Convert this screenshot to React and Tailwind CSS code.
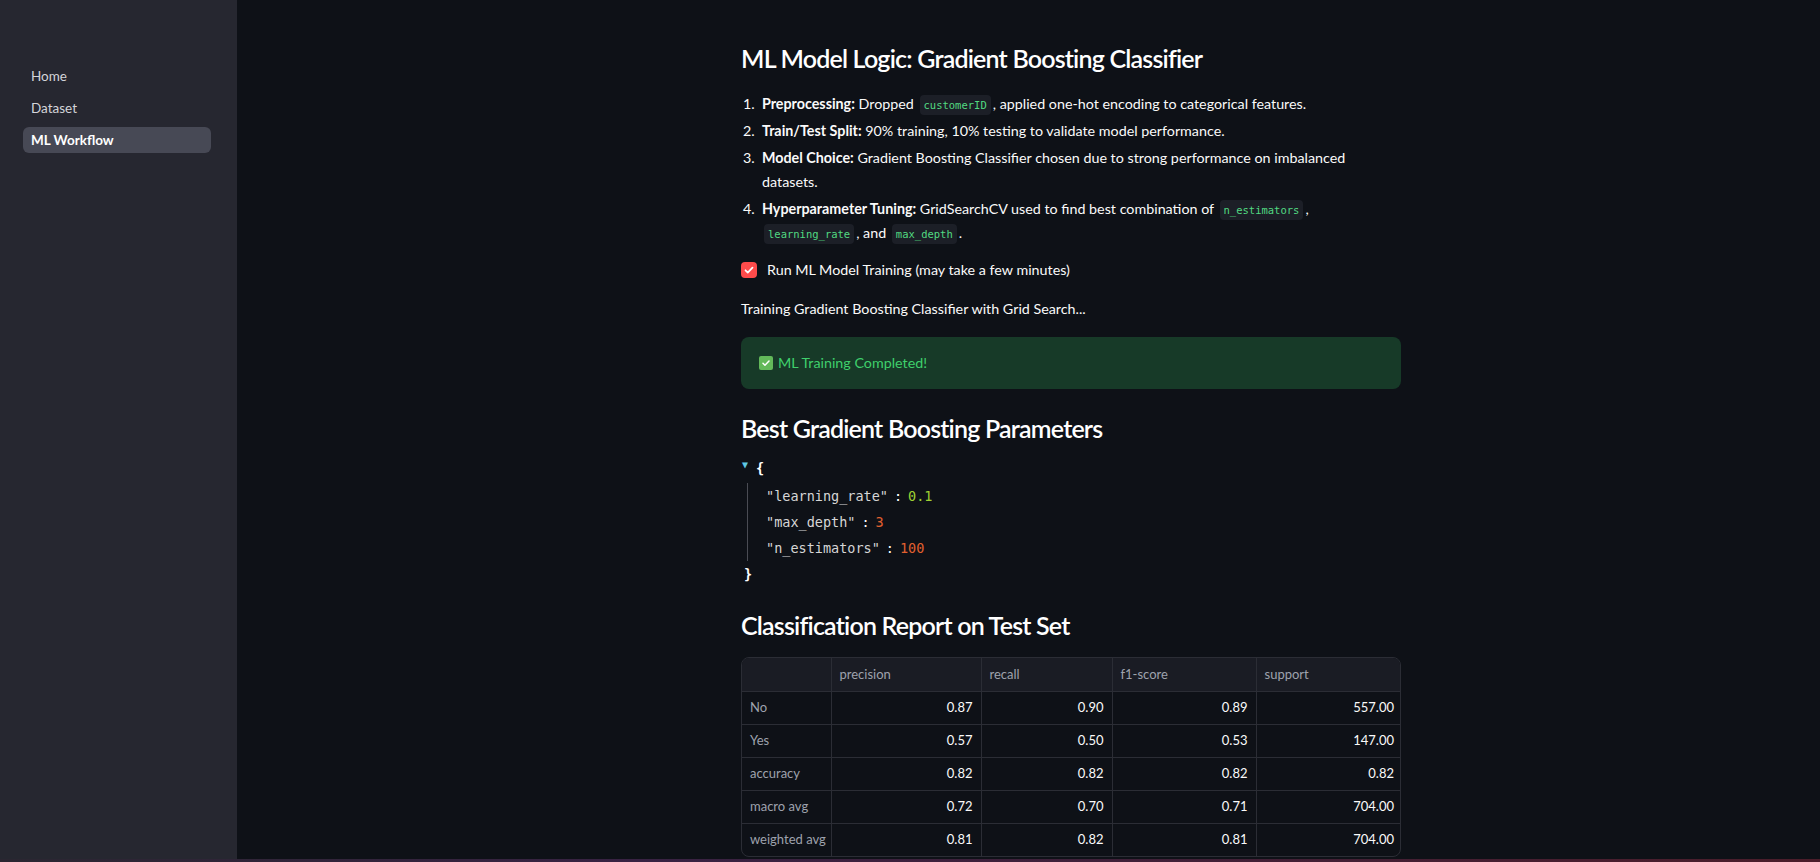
import React from 'react';

const navItems = ['Home', 'Dataset', 'ML Workflow'];

const reportRows = [
  ['No', '0.87', '0.90', '0.89', '557.00'],
  ['Yes', '0.57', '0.50', '0.53', '147.00'],
  ['accuracy', '0.82', '0.82', '0.82', '0.82'],
  ['macro avg', '0.72', '0.70', '0.71', '704.00'],
  ['weighted avg', '0.81', '0.82', '0.81', '704.00'],
];

const colWidths = ['w-[89px]', 'w-[150px]', 'w-[131px]', 'w-[144px]', 'w-[146px]'];

const Code = ({ children }) => (
  <code className="font-['DejaVu_Sans_Mono',monospace] text-[10.5px] leading-none text-[#52da82] bg-[#1c1f27] rounded-[4px] px-[4px] py-[4px] mx-[2px]">
    {children}
  </code>
);

const Sidebar = () => (
  <aside className="w-[237px] shrink-0 bg-[#262730] pt-[63px] pl-[23px]">
    <nav className="flex flex-col gap-[6px]">
      {navItems.map((item) => {
        const active = item === 'ML Workflow';
        return (
          <div
            key={item}
            className={
              active
                ? 'h-[26px] w-[188px] rounded-md bg-[#474955] px-2 flex items-center text-[13.5px] font-bold text-white'
                : 'h-[26px] w-[188px] rounded-md px-2 flex items-center text-[13.5px] text-[#d3d4d9]'
            }
          >
            {item}
          </div>
        );
      })}
    </nav>
  </aside>
);

const CheckIcon = ({ className }) => (
  <svg viewBox="0 0 16 16" className={className}>
    <path d="M4 8.3l2.6 2.6L12 5.4" fill="none" stroke="white" strokeWidth="2" strokeLinecap="round" strokeLinejoin="round" />
  </svg>
);

const JsonView = () => (
  <div className="font-['DejaVu_Sans_Mono',monospace] text-[13.5px] mt-[8px]">
    <div className="h-[29px] flex items-center">
      <span className="w-[15px] pl-[1px] text-[10px] leading-none text-[#5fc8e3] self-start pt-[6px]">▼</span>
      <span className="text-white font-bold">{'{'}</span>
    </div>
    <div className="ml-[6px] border-l border-[#4a4c54] pl-[18px]">
      <div className="h-[26px] flex items-center text-[#d6d6d6]">
        "learning_rate"<span className="text-white mx-[6px]">:</span>
        <span className="text-[#9fd133]">0.1</span>
      </div>
      <div className="h-[26px] flex items-center text-[#d6d6d6]">
        "max_depth"<span className="text-white mx-[6px]">:</span>
        <span className="text-[#e0602f]">3</span>
      </div>
      <div className="h-[26px] flex items-center text-[#d6d6d6]">
        "n_estimators"<span className="text-white mx-[6px]">:</span>
        <span className="text-[#e0602f]">100</span>
      </div>
    </div>
    <div className="h-[26px] flex items-center pl-[3px] text-white font-bold">{'}'}</div>
  </div>
);

const ReportTable = () => (
  <div className="mt-[14px] rounded-lg border border-[#2b2d35] overflow-hidden text-[13px]">
    <table className="w-full table-fixed border-collapse">
      <thead>
        <tr className="bg-[#1a1c24] h-[33px]">
          {['', 'precision', 'recall', 'f1-score', 'support'].map((h, i) => (
            <th
              key={i}
              className={`${colWidths[i]} text-left font-normal text-[#9ea2ad] px-2 border-b border-[#2b2d35] ${i < 4 ? 'border-r' : ''}`}
            >
              {h}
            </th>
          ))}
        </tr>
      </thead>
      <tbody>
        {reportRows.map((row, r) => (
          <tr key={row[0]} className="h-[33px]">
            {row.map((cell, i) => (
              <td
                key={i}
                className={`px-2 whitespace-nowrap border-[#2b2d35] ${i < 4 ? 'border-r' : ''} ${r < 4 ? 'border-b' : ''} ${
                  i === 0 ? 'text-left text-[#9ea2ad]' : 'text-right text-[#fafafa]'
                }`}
              >
                {cell}
              </td>
            ))}
          </tr>
        ))}
      </tbody>
    </table>
  </div>
);

export default function App() {
  return (
    <div className="h-[862px] w-[1820px] flex flex-col overflow-hidden bg-[#0e1117] font-[Lato,sans-serif] text-[#fafafa]">
      <div className="flex flex-1 min-h-0">
        <Sidebar />
        <main className="flex-1 overflow-hidden pl-[504px]">
          <div className="w-[660px] pt-[40px]">
            <h3 className="text-[25px] leading-[36px] font-semibold tracking-[-0.8px] text-white">
              ML Model Logic: Gradient Boosting Classifier
            </h3>

            <ol className="mt-[16px] w-[611px] flex flex-col gap-[3px] text-[14.3px] leading-[24px]">
              <li className="flex">
                <span className="w-[21px] shrink-0 pl-[2px]">1.</span>
                <div>
                  <b className="font-bold">Preprocessing:</b> Dropped <Code>customerID</Code>, applied one-hot encoding to categorical features.
                </div>
              </li>
              <li className="flex">
                <span className="w-[21px] shrink-0 pl-[2px]">2.</span>
                <div>
                  <b className="font-bold">Train/Test Split:</b> 90% training, 10% testing to validate model performance.
                </div>
              </li>
              <li className="flex">
                <span className="w-[21px] shrink-0 pl-[2px]">3.</span>
                <div>
                  <b className="font-bold">Model Choice:</b> Gradient Boosting Classifier chosen due to strong performance on imbalanced datasets.
                </div>
              </li>
              <li className="flex">
                <span className="w-[21px] shrink-0 pl-[2px]">4.</span>
                <div>
                  <b className="font-bold">Hyperparameter Tuning:</b> GridSearchCV used to find best combination of <Code>n_estimators</Code>,{' '}
                  <Code>learning_rate</Code>, and <Code>max_depth</Code>.
                </div>
              </li>
            </ol>

            <label className="mt-[13px] h-[24px] flex items-center gap-[10px] text-[14.3px]">
              <span className="w-[16px] h-[16px] rounded-[4px] bg-[#ff4b4b] flex items-center justify-center">
                <CheckIcon className="w-[14px] h-[14px]" />
              </span>
              Run ML Model Training (may take a few minutes)
            </label>

            <p className="mt-[15px] text-[14.3px] leading-[24px]">
              Training Gradient Boosting Classifier with Grid Search...
            </p>

            <div className="mt-[16px] h-[52px] rounded-lg bg-[#173a28] px-[18px] flex items-center gap-[5px] text-[14.3px] text-[#3fd06c]">
              <span className="w-[14px] h-[14px] rounded-[2px] bg-[#63b95a] flex items-center justify-center">
                <CheckIcon className="w-[12px] h-[12px]" />
              </span>
              ML Training Completed!
            </div>

            <h3 className="mt-[21px] text-[25px] leading-[36px] font-semibold tracking-[-0.8px] text-white">
              Best Gradient Boosting Parameters
            </h3>

            <JsonView />

            <h3 className="mt-[20px] text-[25px] leading-[36px] font-semibold tracking-[-0.8px] text-white">
              Classification Report on Test Set
            </h3>

            <ReportTable />
          </div>
        </main>
      </div>
      <div className="h-[3px] shrink-0 bg-[linear-gradient(90deg,#2a2631_0%,#382243_35%,#4b1d2a_100%)]" />
    </div>
  );
}
